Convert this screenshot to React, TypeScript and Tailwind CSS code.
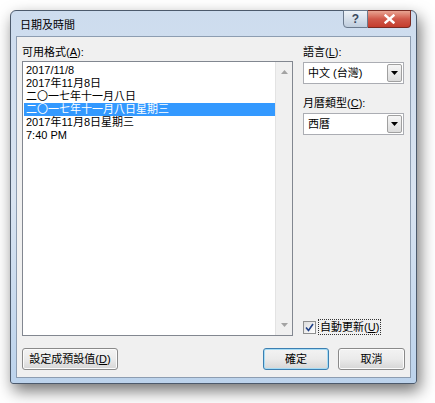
import React from 'react';

const formats = [
  '2017/11/8',
  '2017年11月8日',
  '二〇一七年十一月八日',
  '二〇一七年十一月八日星期三',
  '2017年11月8日星期三',
  '7:40 PM',
];

const font = "font-['Liberation_Sans','Noto_Sans_CJK_TC',sans-serif]";

function ComboBox({ value }: { value: string }) {
  return (
    <div className="flex h-[22px] w-[101px] items-center border border-[#abadb3] bg-white">
      <span className="flex-1 pl-[4px] text-[11px] leading-none">{value}</span>
      <div className="mr-[1px] flex h-[18px] w-[15px] items-center justify-center rounded-[2px] border border-[#a0a0a0] bg-gradient-to-b from-[#f6f6f6] to-[#dcdcdc]">
        <svg width="7" height="4" viewBox="0 0 7 4">
          <path d="M0 0h7L3.5 4z" fill="#000" />
        </svg>
      </div>
    </div>
  );
}

function Button({ children, primary, className = '' }: { children: React.ReactNode; primary?: boolean; className?: string }) {
  return (
    <button
      className={`flex h-[22px] items-center justify-center rounded-[3px] border bg-gradient-to-b from-[#f3f3f3] via-[#ebebeb] to-[#d6d6d6] text-[11px] leading-none text-black ${
        primary ? 'border-[#3c7fb1] shadow-[inset_0_0_0_1px_#a6dcf5]' : 'border-[#8a8a8a] shadow-[inset_0_0_0_1px_#fcfcfc]'
      } ${className}`}
    >
      {children}
    </button>
  );
}

export default function App() {
  return (
    <div className={`h-[403px] w-[435px] bg-white pl-[10px] pt-[10px] ${font}`}>
      <div className="flex h-[374px] w-[407px] flex-col rounded-t-[6px] rounded-b-[3px] border border-[#4c5a6c] bg-gradient-to-b from-[#cddcee] via-[#d9e4f1] to-[#bcd3ec] shadow-[3px_7px_16px_rgba(0,0,0,0.55)]">
        {/* title bar */}
        <div className="relative flex h-[25px] items-center pl-[9px] pt-[3px]">
          <span className="text-[11px] leading-none text-black">日期及時間</span>
          <div className="absolute right-[5px] top-[-1px] flex">
            <div className="flex h-[18px] w-[25px] items-center justify-center rounded-bl-[4px] border border-[#6b7a8d] bg-gradient-to-b from-[#eef3f8] to-[#bfcddd] text-[12px] font-bold leading-none text-[#3a4a5e]">
              ?
            </div>
            <div className="flex h-[18px] w-[43px] items-center justify-center rounded-br-[4px] border border-l-0 border-[#7a2a22] bg-gradient-to-b from-[#e8a493] via-[#d0584a] to-[#c43c2c]">
              <svg width="11" height="10" viewBox="0 0 11 10">
                <path d="M1.5 1.5L9.5 8.5M9.5 1.5L1.5 8.5" stroke="#ffffff" strokeWidth="2.4" strokeLinecap="square" />
              </svg>
            </div>
          </div>
        </div>

        {/* client area */}
        <div className="mx-[5px] mb-[5px] flex flex-1 flex-col border border-[#8d9db1] bg-[#f0f0f0] px-[5px] pb-[7px] pt-[8px] text-[11px] text-black">
          <div className="flex flex-1 gap-[10px]">
            <div className="flex w-[271px] flex-col">
              <div className="h-[16px] leading-[14px]">
                可用格式(<span className="underline">A</span>):
              </div>
              <div className="flex h-[275px] border border-[#828790] bg-white">
                <div className="flex-1 pt-[2px] pl-[1px]">
                  {formats.map((f, i) => (
                    <div
                      key={f}
                      className={`h-[13px] pl-[2px] text-[11px] leading-[13px] ${i === 3 ? 'bg-[#3399ff] text-white' : ''}`}
                    >
                      {f}
                    </div>
                  ))}
                </div>
                <div className="flex w-[17px] flex-col items-center justify-between border-l border-[#e3e3e3] bg-[#f0f0f0] py-[8px]">
                  <svg width="7" height="4" viewBox="0 0 7 4">
                    <path d="M3.5 0L7 4H0z" fill="#a3a3a3" />
                  </svg>
                  <svg width="7" height="4" viewBox="0 0 7 4">
                    <path d="M0 0h7L3.5 4z" fill="#a3a3a3" />
                  </svg>
                </div>
              </div>
            </div>

            <div className="flex flex-1 flex-col">
              <div className="h-[17px] leading-[14px]">
                語言(<span className="underline">L</span>):
              </div>
              <ComboBox value="中文 (台灣)" />
              <div className="mt-[12px] h-[17px] leading-[14px]">
                月曆類型(<span className="underline">C</span>):
              </div>
              <ComboBox value="西曆" />
              <div className="mt-auto mb-[2px] flex items-center gap-[2px]">
                <div className="flex h-[13px] w-[13px] items-center justify-center border border-[#8e8f8f] bg-gradient-to-br from-[#dcdcdc] to-[#ffffff]">
                  <svg width="9" height="9" viewBox="0 0 9 9">
                    <path d="M1 4.5L3.5 7.5L8 1" stroke="#1e3f87" strokeWidth="1.6" fill="none" />
                  </svg>
                </div>
                <div className="border border-dotted border-[#333] px-[1px] leading-[14px]">
                  自動更新(<span className="underline">U</span>)
                </div>
              </div>
            </div>
          </div>

          <div className="mt-[11px] flex items-center">
            <Button className="w-[96px]">
              設定成預設值(<span className="underline">D</span>)
            </Button>
            <Button primary className="ml-auto w-[66px]">
              確定
            </Button>
            <Button className="ml-[9px] w-[67px]">取消</Button>
          </div>
        </div>
      </div>
    </div>
  );
}
